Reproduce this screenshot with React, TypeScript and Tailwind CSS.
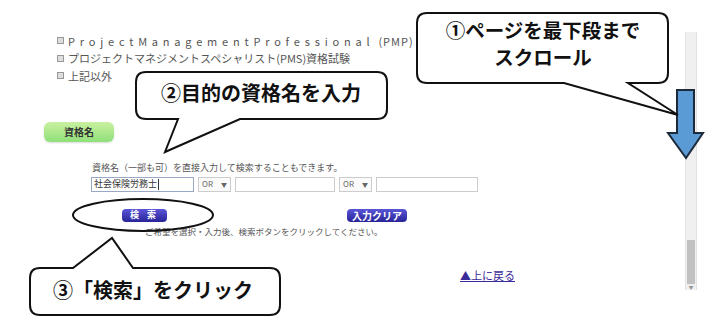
import React from 'react';

const jp = { fontFamily: '"Noto Sans CJK JP", "Noto Sans", sans-serif' };

function CheckRow({ children }: { children: React.ReactNode }) {
  return (
    <div className="flex h-[17.5px] items-center gap-[4px] pl-[57px] text-[11px] text-[#555]">
      <span className="inline-block h-[7px] w-[7px] border border-[#999] bg-[#ddd]" />
      {children}
    </div>
  );
}

function OrSelect() {
  return (
    <div className="flex h-[15px] w-[33px] items-center justify-between border border-[#ccc] bg-[#fafafa] px-[3px] text-[8px] text-[#666]">
      <span>OR</span>
      <span className="text-[6px]">▼</span>
    </div>
  );
}

function Callouts() {
  return (
    <svg className="pointer-events-none absolute left-0 top-0" width="720" height="334" viewBox="0 0 720 334">
      {/* blue down arrow over the scrollbar */}
      <path
        d="M677 90 H694 V133 H703 L686 158 L668 133 H677 Z"
        fill="#5b9bd5"
        stroke="#1c2a3a"
        strokeWidth="2"
      />
      {/* callout 1 */}
      <path
        d="M427 13 H658 Q668 13 668 23 V73 Q668 83 658 83 H628 L678 115 L564 83 H427 Q417 83 417 73 V23 Q417 13 427 13 Z"
        fill="#fff"
        stroke="#111"
        strokeWidth="2"
      />
      <text x="543" y="38" textAnchor="middle" fontSize="19.5" fontWeight="700" fill="#111" style={jp}>
        ①ページを最下段まで
      </text>
      <text x="543" y="65" textAnchor="middle" fontSize="19.5" fontWeight="700" fill="#111" style={jp}>
        スクロール
      </text>
      {/* callout 2 */}
      <path
        d="M146 72 H377 Q387 72 387 82 V109 Q387 119 377 119 H240 L165 152 L178 119 H146 Q136 119 136 109 V82 Q136 72 146 72 Z"
        fill="#fff"
        stroke="#111"
        strokeWidth="2"
      />
      <text x="261" y="101" textAnchor="middle" fontSize="20" fontWeight="700" fill="#111" style={jp}>
        ②目的の資格名を入力
      </text>
      {/* ellipse around search button */}
      <ellipse cx="143" cy="215" rx="70" ry="16" fill="none" stroke="#111" strokeWidth="2" />
      {/* callout 3 */}
      <path
        d="M40 268 H73 L112 238 L133 268 H270 Q280 268 280 278 V305 Q280 315 270 315 H40 Q30 315 30 305 V278 Q30 268 40 268 Z"
        fill="#fff"
        stroke="#111"
        strokeWidth="2"
      />
      <text x="153" y="298" textAnchor="middle" fontSize="20" fontWeight="700" fill="#111" style={jp}>
        ③「検索」をクリック
      </text>
    </svg>
  );
}

export default function App() {
  return (
    <div className="relative flex h-[334px] w-[720px] overflow-hidden bg-white" style={jp}>
      <div className="flex-1 pt-[32px]">
        <CheckRow>
          <span className="tracking-[4.8px]">ProjectManagementProfessional</span>
          <span className="tracking-[1px]">(PMP)</span>
        </CheckRow>
        <CheckRow>
          <span>プロジェクトマネジメントスペシャリスト(PMS)資格試験</span>
        </CheckRow>
        <CheckRow>
          <span>上記以外</span>
        </CheckRow>

        <div className="ml-[44px] mt-[37px] flex h-[20px] w-[70px] items-center justify-center rounded-[6px] bg-gradient-to-b from-[#c9f0a0] to-[#8fe07a] text-[10px] font-bold text-[#333] shadow-[0_1px_2px_rgba(0,0,0,0.15)]">
          資格名
        </div>

        <div className="ml-[92px] mt-[20px] text-[9px] leading-[12px] text-[#555]">
          資格名（一部も可）を直接入力して検索することもできます。
        </div>

        <div className="ml-[91px] mt-[3px] flex items-center gap-[4px]">
          <div className="flex h-[15px] w-[103px] items-center border border-[#9aa8c8] px-[2px] text-[9px] text-[#333]">
            社会保険労務士<span className="ml-[1px] inline-block h-[11px] w-px bg-[#333]" />
          </div>
          <OrSelect />
          <div className="h-[15px] w-[100px] border border-[#ccc]" />
          <OrSelect />
          <div className="h-[15px] w-[102px] border border-[#ccc]" />
        </div>

        <div className="mt-[17px] flex items-center">
          <div className="ml-[122px] flex h-[13px] w-[45px] items-center justify-center rounded-[4px] bg-gradient-to-b from-[#5a55d8] to-[#2a2499] text-[9px] font-bold tracking-[3px] text-white">
            検 索
          </div>
          <div className="ml-[180px] flex h-[13px] w-[60px] items-center justify-center rounded-[4px] bg-gradient-to-b from-[#5a55d8] to-[#2a2499] text-[10px] font-bold text-white">
            入力クリア
          </div>
        </div>

        <div className="ml-[145px] mt-[3px] text-[8.5px] leading-[12px] text-[#555]">
          ご希望を選択・入力後、検索ボタンをクリックしてください。
        </div>

        <div className="ml-[460px] mt-[31px] text-[11px] leading-[14px] text-[#3a2a9a] underline">
          ▲上に戻る
        </div>
      </div>

      <div className="mr-[23px] mt-[32px] flex h-[258px] w-[12px] flex-col border-x border-[#e2e2e2] bg-[#f0f0f0]">
        <div className="flex-1" />
        <div className="mx-auto h-[44px] w-[8px] bg-[#c1c1c1]" />
        <div className="h-[6px] text-center text-[5px] leading-[6px] text-[#999]">▼</div>
      </div>

      <Callouts />
    </div>
  );
}
